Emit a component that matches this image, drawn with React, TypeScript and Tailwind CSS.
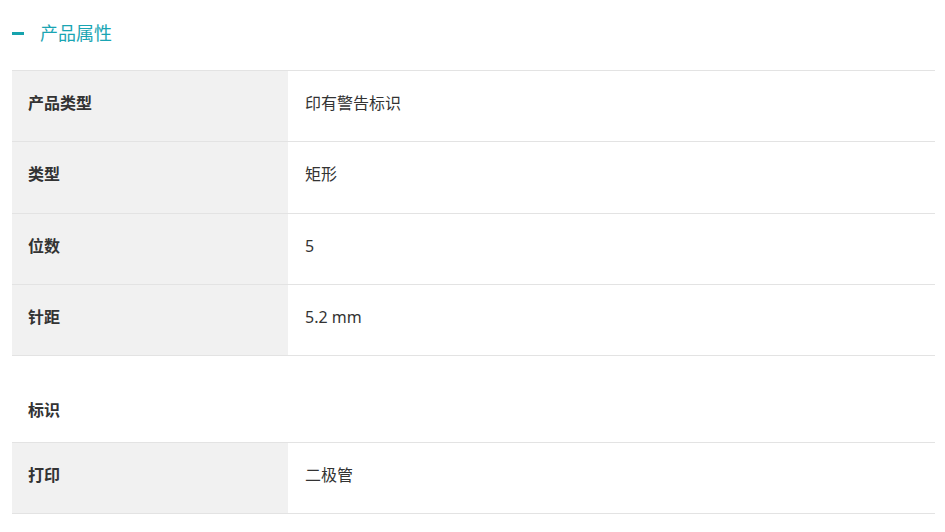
const rows1 = [
  { label: '产品类型', value: '印有警告标识' },
  { label: '类型', value: '矩形' },
  { label: '位数', value: '5' },
  { label: '针距', value: '5.2 mm' },
]

const rows2 = [{ label: '打印', value: '二极管' }]

function Row({ label, value }: { label: string; value: string }) {
  return (
    <div className="flex h-[71.3px] border-b border-[#e3e3e3]">
      <div className="w-[276px] shrink-0 bg-[#f1f1f1] pl-4 pb-[6px] flex items-center text-[16px] font-bold text-[#333]">
        {label}
      </div>
      <div className="flex-1 pl-[17px] pb-[6px] flex items-center text-[16px] text-[#333]">{value}</div>
    </div>
  )
}

export default function App() {
  return (
    <div
      className="w-[945px] h-[532px] bg-white overflow-hidden"
      style={{ fontFamily: '"Noto Sans", "Noto Sans CJK SC", sans-serif' }}
    >
      {/* Section header */}
      <div className="flex items-center h-[66px] pl-3">
        <span className="block w-3 h-[3px] bg-[#16a3ad]" />
        <span className="ml-4 text-[18px] text-[#1aa5b3]">产品属性</span>
      </div>

      <div className="ml-3 mr-[10px] border-t border-[#e3e3e3] mt-[4px]">
        {rows1.map((r) => (
          <Row key={r.label} {...r} />
        ))}
        <div className="h-[87px] border-b border-[#e3e3e3] pl-4 flex items-end pb-[20px] text-[16px] font-bold text-[#333]">
          标识
        </div>
        {rows2.map((r) => (
          <Row key={r.label} {...r} />
        ))}
      </div>
    </div>
  )
}
